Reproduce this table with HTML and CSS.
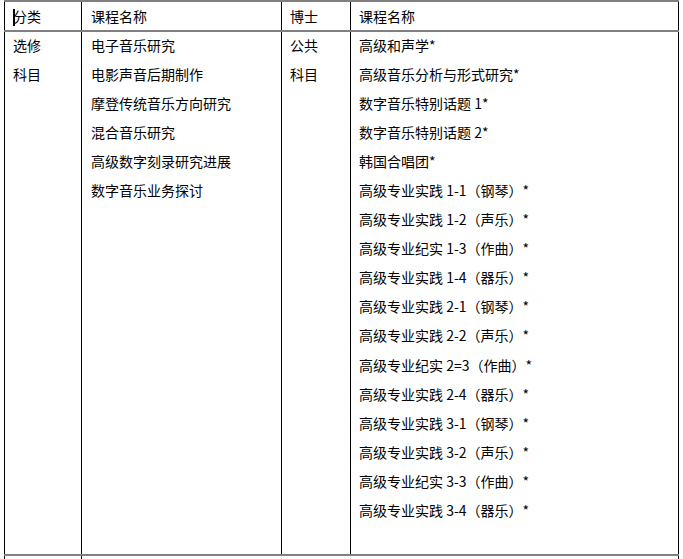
FILE: index.html
```html
<!DOCTYPE html>
<html lang="zh-CN">
<head>
<meta charset="utf-8">
<title>课程表</title>
<link rel="stylesheet" href="styles.css">
</head>
<body>
<div class="sheet">
  <div class="row head">
    <div class="c c1"><span class="caret"></span>分类</div>
    <div class="c c2">课程名称</div>
    <div class="c c3">博士</div>
    <div class="c c4">课程名称</div>
  </div>
  <div class="row body">
    <div class="c c1"><div class="lines"><div>选修</div><div>科目</div></div></div>
    <div class="c c2"><div class="lines">
      <div>电子音乐研究</div>
      <div>电影声音后期制作</div>
      <div>摩登传统音乐方向研究</div>
      <div>混合音乐研究</div>
      <div>高级数字刻录研究进展</div>
      <div>数字音乐业务探讨</div>
    </div></div>
    <div class="c c3"><div class="lines"><div>公共</div><div>科目</div></div></div>
    <div class="c c4"><div class="lines">
      <div>高级和声学*</div>
      <div>高级音乐分析与形式研究*</div>
      <div>数字音乐特别话题 1*</div>
      <div>数字音乐特别话题 2*</div>
      <div>韩国合唱团*</div>
      <div>高级专业实践 1-1（钢琴）*</div>
      <div>高级专业实践 1-2（声乐）*</div>
      <div>高级专业纪实 1-3（作曲）*</div>
      <div>高级专业实践 1-4（器乐）*</div>
      <div>高级专业实践 2-1（钢琴）*</div>
      <div>高级专业实践 2-2（声乐）*</div>
      <div>高级专业纪实 2=3（作曲）*</div>
      <div>高级专业实践 2-4（器乐）*</div>
      <div>高级专业实践 3-1（钢琴）*</div>
      <div>高级专业实践 3-2（声乐）*</div>
      <div>高级专业纪实 3-3（作曲）*</div>
      <div>高级专业实践 3-4（器乐）*</div>
    </div></div>
  </div>
  <div class="row foot">
    <div class="c c1"></div>
    <div class="c crest"></div>
  </div>
</div>
</body>
</html>
```
FILE: styles.css
```css
html, body {
  margin: 0;
  padding: 0;
  background: #fff;
}
body {
  font-family: "Noto Sans CJK SC", "Noto Sans", sans-serif;
  font-size: 14px;
  color: #000;
  overflow: hidden;
  height: 559px;
}
.sheet {
  margin-left: 4px;
  width: 675px;
}
.row {
  display: grid;
  grid-template-columns: 77px 200px 69px 329px;
}
.c {
  border-left: 1px solid #000;
  padding-left: 8px;
  box-sizing: border-box;
  white-space: nowrap;
}
.c2 { padding-left: 9px; }
.c4 { border-right: 1px solid #000; }
.head {
  border-top: 2px solid #808080;
  border-bottom: 2px solid #808080;
  height: 32px;
  box-sizing: border-box;
}
.head .c {
  line-height: 28px;
}
.caret {
  display: inline-block;
  width: 2px;
  height: 17px;
  background: #000;
  vertical-align: middle;
  margin-right: -2px;
  position: relative;
  top: -1px;
}
.body {
  height: 524px;
  border-bottom: 2px solid #808080;
  box-sizing: border-box;
}
.lines {
  margin-top: -1.5px;
  line-height: 29.1px;
}
.foot {
  grid-template-columns: 77px 598px;
  height: 10px;
}
.crest { border-right: 1px solid #000; }
```
